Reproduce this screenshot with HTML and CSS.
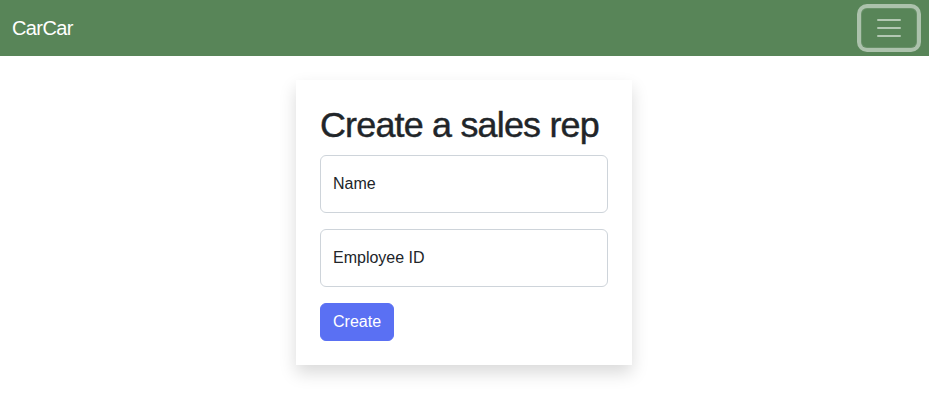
FILE: index.html
```html
<!DOCTYPE html>
<html lang="en">
<head>
<meta charset="utf-8">
<title>CarCar</title>
<link rel="stylesheet" href="styles.css">
</head>
<body>
<nav class="navbar">
  <div class="navbar-inner">
    <a class="brand" href="#">CarCar</a>
    <button class="toggler" type="button" aria-label="Toggle navigation">
      <svg class="toggler-icon" viewBox="0 0 30 30" width="30" height="30"><path d="M4 7h22M4 15h22M4 23h22" stroke="rgba(255,255,255,0.55)" stroke-width="2" stroke-linecap="round" stroke-miterlimit="10" fill="none"/></svg>
    </button>
  </div>
</nav>
<main class="container">
  <div class="card">
    <h1 class="title">Create a sales rep</h1>
    <form class="form">
      <div class="field">
        <input class="input" type="text" placeholder=" " id="name">
        <label class="label" for="name">Name</label>
      </div>
      <div class="field">
        <input class="input" type="text" placeholder=" " id="employee">
        <label class="label" for="employee">Employee ID</label>
      </div>
      <button class="btn" type="button">Create</button>
    </form>
  </div>
</main>
</body>
</html>
```
FILE: styles.css
```css
* { box-sizing: border-box; }
html, body { margin: 0; padding: 0; }
body {
  font-family: "Liberation Sans", Arial, sans-serif;
  font-size: 16px;
  line-height: 1.5;
  color: #212529;
  background: #fff;
  min-height: 400px;
}
.navbar {
  background: #588558;
  padding: 8px 0;
}
.navbar-inner {
  display: flex;
  align-items: center;
  justify-content: space-between;
  padding: 0 12px;
}
.brand {
  color: #fff;
  text-decoration: none;
  font-size: 20px;
  line-height: 30px;
  padding: 5px 0;
  letter-spacing: -0.6px;
}
.toggler {
  display: flex;
  align-items: center;
  justify-content: center;
  width: 56px;
  height: 40px;
  padding: 0;
  background: transparent;
  border: 1px solid rgba(255,255,255,0.1);
  border-radius: 6px;
  box-shadow: 0 0 0 4px rgba(255,255,255,0.5);
}
.toggler-icon { display: block; }
.container {
  width: 721px;
  margin: 0 auto;
  padding: 0 12px 40px;
  display: flex;
}
.card {
  width: 336px;
  margin: 24px 0 0 180px;
  padding: 24px;
  background: #fff;
  box-shadow: 0 8px 16px rgba(0,0,0,0.15);
}
.title {
  margin: 0 0 8px;
  font-size: 35.9px;
  line-height: 1.2;
  font-weight: 400;
  letter-spacing: -0.8px;
  -webkit-text-stroke: 0.45px #212529;
  color: #212529;
}
.form { display: flex; flex-direction: column; align-items: flex-start; }
.field {
  position: relative;
  width: 100%;
  margin-bottom: 16px;
}
.input {
  display: block;
  width: 100%;
  height: 58px;
  padding: 26px 12px 10px;
  font: inherit;
  color: #212529;
  border: 1px solid #ced4da;
  border-radius: 6px;
  background: #fff;
}
.label {
  position: absolute;
  top: 0;
  left: 0;
  padding: 17px 13px 15px;
  line-height: 1.5;
  color: #212529;
  pointer-events: none;
}
.btn {
  font: inherit;
  color: #fff;
  background: #5a70f3;
  border: 1px solid #5a70f3;
  border-radius: 6px;
  padding: 6px 12px;
  line-height: 1.5;
}
```
